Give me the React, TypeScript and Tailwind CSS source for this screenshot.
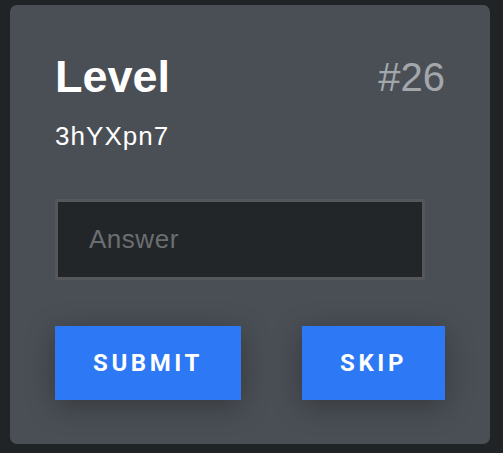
import React, { useState } from 'react';

export default function App() {
  const [answer, setAnswer] = useState('');

  return (
    <div
      className="min-h-screen bg-[#212427] pt-[5px] pl-[10px] pr-[13px] pb-[9px]"
      style={{ fontFamily: '"Liberation Sans", Arial, sans-serif' }}
    >
      <div className="w-[480px] h-[439px] rounded-[7px] bg-[#4a4f55] px-[45px] pt-[49px] pb-[44px] flex flex-col">
        <div className="flex items-start justify-between">
          <div>
            <h1 className="text-[45px] leading-[46px] font-bold text-white">Level</h1>
            <p className="mt-[21px] text-[26px] leading-[30px] tracking-[0.04em] text-white">3hYXpn7</p>
          </div>
          <span className="mt-[3px] text-[40px] leading-[40px] text-[#a3a7ab]">#26</span>
        </div>

        <input
          value={answer}
          onChange={(e) => setAnswer(e.target.value)}
          placeholder="Answer"
          className="mt-12 w-[370px] h-[81px] shrink-0 border-[3px] border-[#55575a] bg-[#232629] px-[31px] text-[26px] tracking-[0.02em] text-white placeholder-[#6b6e71] outline-none"
        />

        <div
          className="mt-[46px] flex justify-between"
          style={{ fontFamily: 'Roboto, "Liberation Sans", sans-serif' }}
        >
          <button className="h-[74px] px-[38px] bg-[#2c78f5] text-white text-[24px] font-bold tracking-[0.15em] shadow-[0_6px_30px_rgba(0,0,0,0.28)]">
            SUBMIT
          </button>
          <button className="h-[74px] px-[38px] bg-[#2c78f5] text-white text-[24px] font-bold tracking-[0.15em] shadow-[0_6px_30px_rgba(0,0,0,0.28)]">
            SKIP
          </button>
        </div>
      </div>
    </div>
  );
}
